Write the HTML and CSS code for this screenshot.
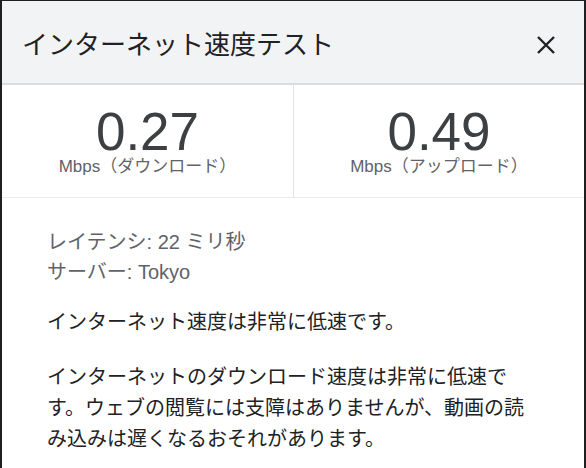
FILE: index.html
```html
<!DOCTYPE html>
<html lang="ja">
<head>
<meta charset="utf-8">
<title>インターネット速度テスト</title>
<link rel="stylesheet" href="styles.css">
</head>
<body>
<div class="dialog">
  <header class="header">
    <h1 class="title">インターネット速度テスト</h1>
    <button class="close" aria-label="閉じる">
      <svg width="20" height="20" viewBox="0 0 20 20"><path d="M2 2 L18 18 M18 2 L2 18" stroke="#202124" stroke-width="2.4" fill="none"/></svg>
    </button>
  </header>
  <section class="speeds">
    <div class="speed">
      <div class="value">0.27</div>
      <div class="unit">Mbps（ダウンロード）</div>
    </div>
    <div class="speed">
      <div class="value">0.49</div>
      <div class="unit">Mbps（アップロード）</div>
    </div>
  </section>
  <section class="content">
    <div class="info">
      <div>レイテンシ: 22 ミリ秒</div>
      <div>サーバー: Tokyo</div>
    </div>
    <p class="summary">インターネット速度は非常に低速です。</p>
    <p class="detail">インターネットのダウンロード速度は非常に低速です。ウェブの閲覧には支障はありませんが、動画の読み込みは遅くなるおそれがあります。</p>
  </section>
</div>
</body>
</html>
```
FILE: styles.css
```css
html, body {
  margin: 0;
  padding: 0;
  background: #ffffff;
}
body {
  font-family: "Liberation Sans", "Noto Sans CJK JP", sans-serif;
  color: #202124;
}
.dialog {
  box-sizing: border-box;
  width: 586px;
  height: 468px;
  border-left: 2px solid #1f1f1f;
  border-right: 2px solid #1f1f1f;
  border-top: 1px solid #1f1f1f;
  overflow: hidden;
}
.header {
  box-sizing: border-box;
  height: 84px;
  background: #f1f3f4;
  border-bottom: 2px solid #dadce0;
  display: flex;
  align-items: center;
  justify-content: space-between;
  padding: 6px 28px 0 20px;
}
.title {
  margin: 0;
  font-size: 26px;
  font-weight: normal;
  line-height: 32px;
  color: #202124;
}
.close {
  border: 0;
  background: none;
  padding: 0;
  width: 20px;
  height: 20px;
  display: block;
}
.close svg {
  display: block;
}
.speeds {
  display: grid;
  grid-template-columns: 1fr 1fr;
  border-bottom: 1px solid #e8eaed;
}
.speed {
  box-sizing: border-box;
  height: 112px;
  padding-top: 20px;
  text-align: center;
}
.speed + .speed {
  border-left: 1px solid #e3e3e3;
}
.value {
  font-size: 53px;
  line-height: 53px;
  color: #3c4043;
}
.unit {
  font-size: 17px;
  line-height: 17px;
  color: #5f6368;
}
.content {
  padding: 29px 45px 0 45px;
  font-size: 20px;
}
.info {
  line-height: 30px;
  color: #5f6368;
}
.content p {
  margin: 0;
  line-height: 31px;
  color: #202124;
}
.summary {
  margin-top: 20px !important;
}
.detail {
  margin-top: 24px !important;
}
```
